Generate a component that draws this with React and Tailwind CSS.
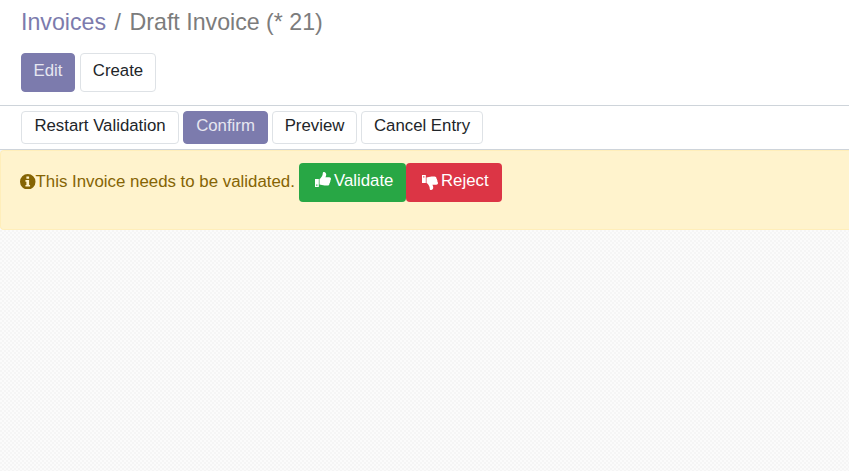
function Btn({ primary, className = '', children }) {
  return (
    <button
      className={`inline-flex items-start justify-center rounded-[4px] border text-[16.8px] leading-6 ${
        primary ? 'border-[#7c7bad] bg-[#7c7bad] text-[#e6e6f0]' : 'border-[#dee2e6] bg-white text-[#212529]'
      } ${className}`}
    >
      {children}
    </button>
  )
}

function InfoIcon() {
  return (
    <svg viewBox="0 0 16 16" className="-mt-[1px] h-[15.5px] w-[15.5px] shrink-0">
      <path
        fillRule="evenodd"
        fill="currentColor"
        d="M8 0a8 8 0 1 1 0 16A8 8 0 0 1 8 0zM6.6 2.6v2.3h2.8V2.6zM5.6 6.3v1.6h1v3.4h-1v1.7h4.8v-1.7h-1V6.3z"
      />
    </svg>
  )
}

function ThumbIcon({ down }) {
  return (
    <svg viewBox="0 0 16 16" className={`h-[16px] w-[16px] shrink-0 ${down ? 'rotate-180 -scale-x-100' : ''}`}>
      <path
        fill="currentColor"
        fillRule="evenodd"
        d="M0 7h3.8v8H0zM1.2 12.6v1.2h1.2v-1.2zM4.5 7c1-.4 2.6-2.6 3-4 .3-1 .1-2.6.9-3 2-.2 3 1.4 2.8 3-.1.9-.5 1.6-.8 2.3h3.9c1 0 1.7.8 1.7 1.7 0 .6-.3 1-.6 1.3.2.6.1 1.3-.4 1.7.1.7-.1 1.3-.6 1.6.1 1.2-.6 2-1.8 2H9.6c-1.8 0-3.5-.9-5.1-1z"
      />
    </svg>
  )
}

export default function App() {
  return (
    <div className="flex h-[471px] flex-col bg-[#f8f8f8] bg-[repeating-conic-gradient(#f5f5f5_0_25%,#fbfbfb_0_50%)] bg-[length:4px_4px] font-['Liberation_Sans',sans-serif]">
      {/* Breadcrumb + main buttons */}
      <div className="h-[106px] border-b border-[#ced4da] bg-white px-[21px] pt-[7px]">
        <div className="flex h-[30px] items-center gap-[8.5px] text-[23.2px] leading-[30px] text-[#7c7c7c]">
          <span className="text-[#7c7bad]">Invoices</span>
          <span>/</span>
          <span>Draft Invoice (* 21)</span>
        </div>
        <div className="mt-[16px] flex gap-[5px]">
          <Btn primary className="h-[39px] w-[54px] pt-[5px]">Edit</Btn>
          <Btn className="h-[39px] w-[76px] pt-[5px]">Create</Btn>
        </div>
      </div>

      {/* Status bar buttons */}
      <div className="flex h-[44px] gap-[4px] border-b border-[#ced4da] bg-white px-[21px] pt-[5px]">
        <Btn className="h-[33px] w-[158px] pt-[2px]">Restart Validation</Btn>
        <Btn primary className="h-[33px] w-[85px] pt-[2px]">Confirm</Btn>
        <Btn className="h-[33px] w-[85px] pt-[2px]">Preview</Btn>
        <Btn className="h-[33px] w-[122px] pt-[2px]">Cancel Entry</Btn>
      </div>

      {/* Validation alert */}
      <div className="flex h-[80px] items-start rounded-l-[4px] border border-r-0 border-[#ffeeba] bg-[#fff3cd] pl-[19px] pt-[12px] text-[16.85px] text-[#856404]">
        <span className="flex h-[38px] w-[279px] items-center">
          <InfoIcon />
          <span>This Invoice needs to be validated.</span>
        </span>
        <button className="flex h-[39px] w-[107px] items-start gap-[3px] rounded-[4px] bg-[#28a745] pl-[16px] pt-[6px] text-[16.8px] leading-6 text-white">
          <span className="mt-[3px]"><ThumbIcon /></span>
          Validate
        </button>
        <button className="flex h-[39px] w-[96px] items-start gap-[3px] rounded-[4px] bg-[#dc3545] pl-[16px] pt-[6px] text-[16.8px] leading-6 text-white">
          <span className="mt-[5px]"><ThumbIcon down /></span>
          Reject
        </button>
      </div>
    </div>
  )
}
